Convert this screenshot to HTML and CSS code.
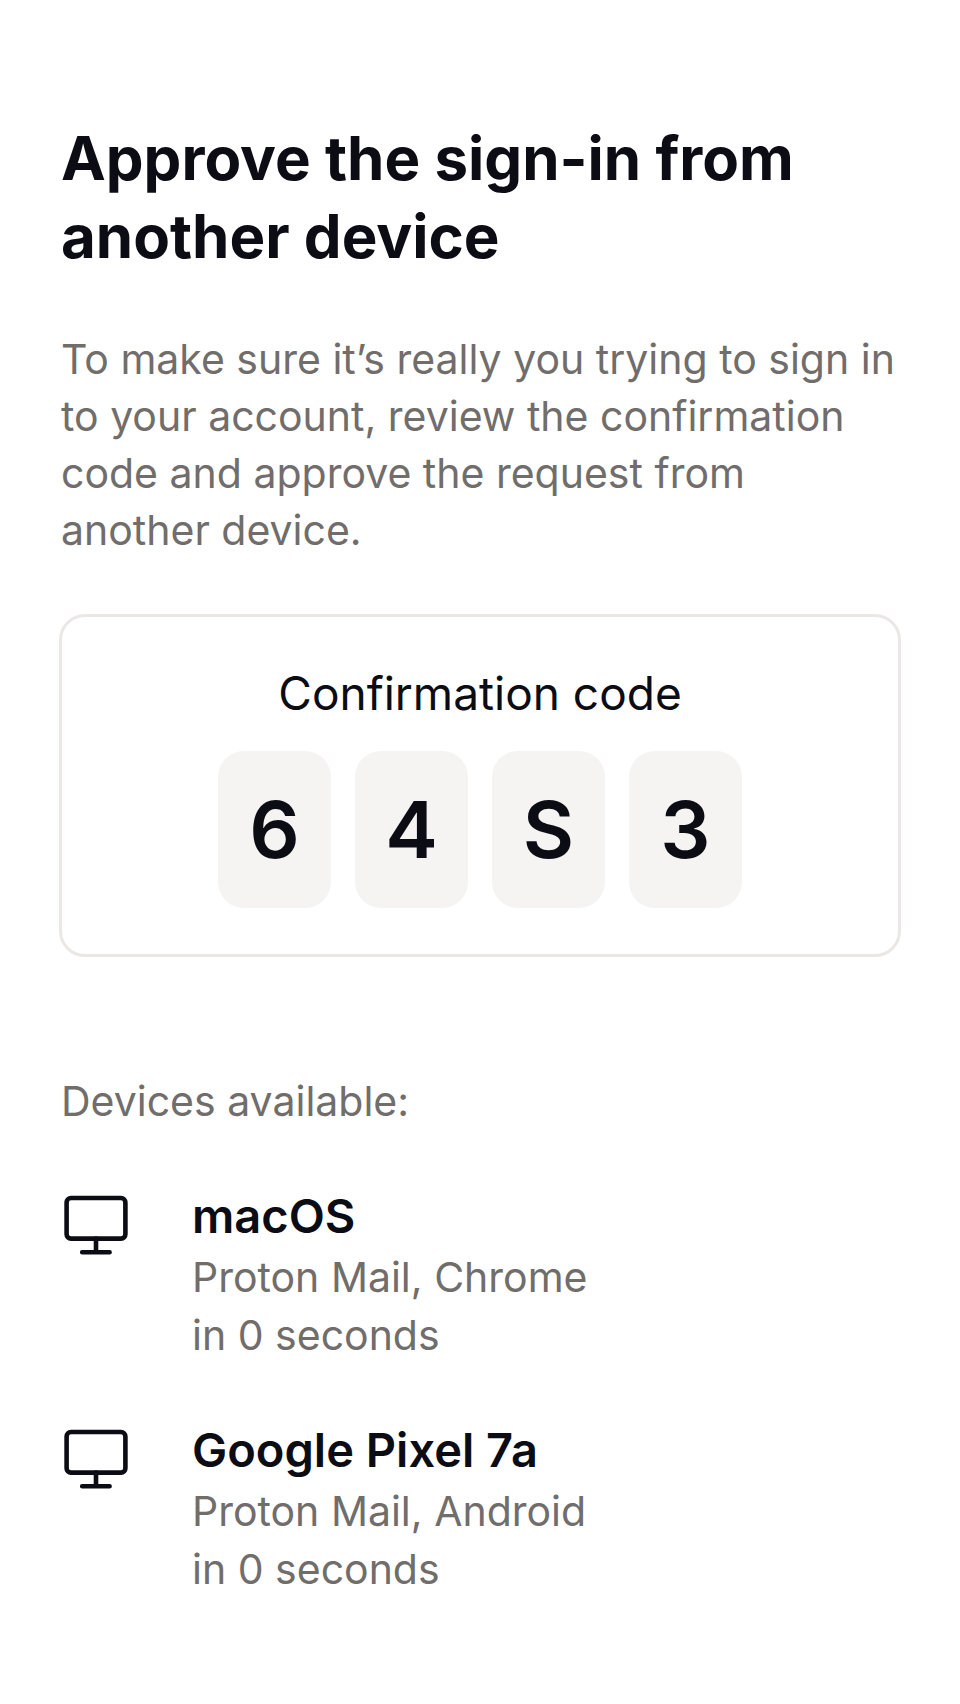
FILE: index.html
```html
<!DOCTYPE html>
<html lang="en">
<head>
<meta charset="utf-8">
<meta name="viewport" content="width=device-width, initial-scale=1">
<title>Approve the sign-in</title>
<link rel="stylesheet" href="styles.css">
</head>
<body>
<main class="page">
  <h1 class="title">Approve the sign-in from another device</h1>
  <p class="intro">To make sure it’s really you trying to sign in to your account, review the confirmation code and approve the request from another device.</p>
  <section class="card" aria-labelledby="code-label">
    <h2 class="card-label" id="code-label">Confirmation code</h2>
    <div class="code">
      <span class="digit">6</span>
      <span class="digit">4</span>
      <span class="digit">S</span>
      <span class="digit">3</span>
    </div>
  </section>
  <p class="devices-label">Devices available:</p>
  <ul class="devices">
    <li class="device">
      <svg class="device-icon" viewBox="0 0 64 64" aria-hidden="true"><rect x="2.6" y="3" width="58.8" height="40.6" rx="4.4"/><path d="M32 43.6v13.6M18.2 57.2h27.4"/></svg>
      <div class="device-info">
        <h3 class="device-name">macOS</h3>
        <p class="device-detail">Proton Mail, Chrome</p>
        <p class="device-detail">in 0 seconds</p>
      </div>
    </li>
    <li class="device">
      <svg class="device-icon" viewBox="0 0 64 64" aria-hidden="true"><rect x="2.6" y="3" width="58.8" height="40.6" rx="4.4"/><path d="M32 43.6v13.6M18.2 57.2h27.4"/></svg>
      <div class="device-info">
        <h3 class="device-name">Google Pixel 7a</h3>
        <p class="device-detail">Proton Mail, Android</p>
        <p class="device-detail">in 0 seconds</p>
      </div>
    </li>
  </ul>
</main>
</body>
</html>
```
FILE: styles.css
```css
* { box-sizing: border-box; }
body {
  margin: 0;
  background: #fff;
  color: #0c0c14;
  font-family: Inter, "Liberation Sans", sans-serif;
}
h1, h2, h3, p, ul { margin: 0; padding: 0; }
.page { padding: 119px 59px 84px; }
.title, .intro, .devices-label { padding: 0 2px; }
.title { font-size: 60px; line-height: 78px; font-weight: 700; }
.intro, .devices-label, .device-detail {
  color: #706d6b;
  font-size: 41px;
  line-height: 57px;
}
.intro { margin-top: 56px; }
.card {
  margin-top: 55px;
  padding: 46px 24px;
  border: 3px solid #ebe7e4;
  border-radius: 26px;
  text-align: center;
}
.card-label { font-size: 46px; line-height: 60px; font-weight: 400; }
.code {
  display: flex;
  justify-content: center;
  gap: 24px;
  margin-top: 28px;
}
.digit {
  width: 113px;
  border-radius: 26px;
  background: #f5f4f2;
  font-size: 79px;
  line-height: 157px;
  font-weight: 600;
}
.devices-label { margin-top: 116px; }
.devices { display: grid; gap: 54px; margin-top: 54px; list-style: none; }
.device { display: flex; gap: 64px; }
.device-icon {
  flex: none;
  width: 64px;
  height: 64px;
  margin: 11px 0 0 5px;
  fill: none;
  stroke: #0c0c14;
  stroke-width: 4.6;
  stroke-linecap: round;
}
.device-name { font-size: 47px; line-height: 64px; font-weight: 600; }
.device-detail { line-height: 58px; }
```
